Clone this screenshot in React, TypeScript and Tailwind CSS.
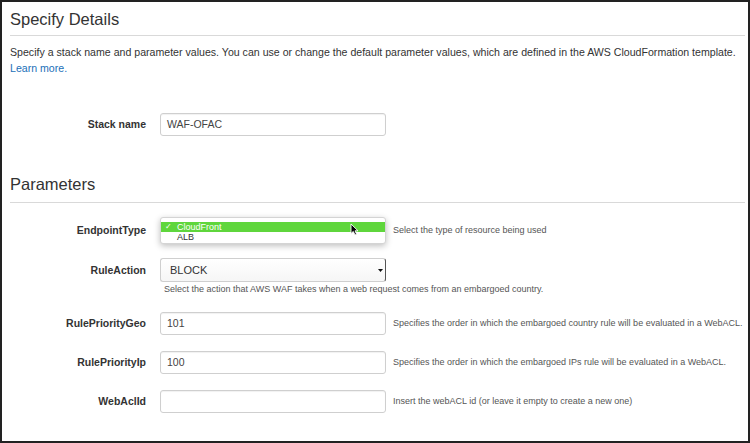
import React from 'react';

// Fields shown under "Parameters"
const params = [
  { label: 'RulePriorityGeo', value: '101', help: 'Specifies the order in which the embargoed country rule will be evaluated in a WebACL.' },
  { label: 'RulePriorityIp', value: '100', help: 'Specifies the order in which the embargoed IPs rule will be evaluated in a WebACL.' },
  { label: 'WebAclId', value: '', help: 'Insert the webACL id (or leave it empty to create a new one)' },
];

function Label({ children }: { children: React.ReactNode }) {
  return (
    <div className="w-[136px] shrink-0 text-right text-[10.5px] font-bold leading-[23px] text-[#333]">
      {children}
    </div>
  );
}

function TextInput({ value }: { value: string }) {
  return (
    <div className="ml-[14px] flex h-[23px] w-[226px] shrink-0 items-center rounded-[3px] border border-[#cfcfcf] bg-white pl-[6px] text-[10.5px] text-[#444] shadow-[inset_0_1px_1px_rgba(0,0,0,0.06)]">
      {value}
    </div>
  );
}

function Help({ children }: { children: React.ReactNode }) {
  return <div className="ml-[7px] text-[9px] leading-[23px] text-[#555]">{children}</div>;
}

function Cursor() {
  return (
    <svg className="absolute left-[189px] top-[5px]" width="9" height="13" viewBox="0 0 9 13">
      <path d="M1 1 L1 10.5 L3.3 8.4 L5 12 L6.6 11.3 L5 7.8 L8 7.8 Z" fill="#000" stroke="#fff" strokeWidth="0.9" strokeLinejoin="round" />
    </svg>
  );
}

export default function App() {
  return (
    <div
      className="h-[443px] w-[750px] overflow-hidden border-2 border-[#222] bg-white pl-[8px] pr-[3px]"
      style={{ fontFamily: '"Liberation Sans", Arial, sans-serif' }}
    >
      <div className="h-[34px] border-b border-[#d9d9d9] pt-[7px] text-[16.5px] leading-[20px] text-[#333]">
        Specify Details
      </div>

      <p className="mt-[8px] text-[10.6px] leading-[16px] text-[#333]">
        Specify a stack name and parameter values. You can use or change the default parameter values, which are defined in the AWS CloudFormation template.
        <br />
        <a className="text-[#1b6fb8]">Learn more.</a>
      </p>

      <div className="mt-[37px] flex">
        <Label>Stack name</Label>
        <TextInput value="WAF-OFAC" />
      </div>

      <div className="mt-[38px] h-[29px] border-b border-[#d9d9d9] text-[16.5px] leading-[20px] text-[#333]">
        Parameters
      </div>

      <div className="mt-[16px] flex">
        <Label>EndpointType</Label>
        <div className="relative ml-[14px] h-[23px] w-[226px] shrink-0">
          {/* open dropdown list */}
          <div className="absolute left-0 top-[-2px] h-[27px] w-full rounded-[3px] border border-[#d4d4d4] bg-white pt-[4px] shadow-[0_2px_6px_rgba(0,0,0,0.25)]">
            <div className="flex h-[10px] items-center bg-[#5fd63c] pl-[4px] text-[9px] leading-[10px] text-white">
              <span className="w-[12px] text-[8px]">✓</span>
              CloudFront
            </div>
            <div className="flex h-[10px] items-center pl-[16px] text-[9px] leading-[10px] text-[#333]">ALB</div>
            <Cursor />
          </div>
        </div>
        <Help>Select the type of resource being used</Help>
      </div>

      <div className="mt-[16px] flex">
        <div className="w-[136px] shrink-0 text-right text-[10.5px] font-bold leading-[24px] text-[#333]">RuleAction</div>
        <div className="ml-[14px] w-[226px] shrink-0">
          <div className="flex h-[24px] items-center rounded-[3px] border border-[#cfcfcf] border-r-[#555] border-r-[1.5px] bg-gradient-to-b from-white to-[#f6f6f6] text-[11px] text-[#333]">
            <span className="flex-1 pl-[9px]">BLOCK</span>
            <span className="flex h-full w-[9px] items-center justify-center">
              <svg width="5" height="3" viewBox="0 0 5 3">
                <path d="M0 0 L5 0 L2.5 3 Z" fill="#111" />
              </svg>
            </span>
          </div>
          <div className="mt-[1px] whitespace-nowrap pl-[4px] text-[9px] leading-[12px] text-[#555]">
            Select the action that AWS WAF takes when a web request comes from an embargoed country.
          </div>
        </div>
      </div>

      <div className="mt-[17px] flex flex-col gap-[16px]">
        {params.map(p => (
          <div key={p.label} className="flex">
            <Label>{p.label}</Label>
            <TextInput value={p.value} />
            <Help>{p.help}</Help>
          </div>
        ))}
      </div>
    </div>
  );
}
